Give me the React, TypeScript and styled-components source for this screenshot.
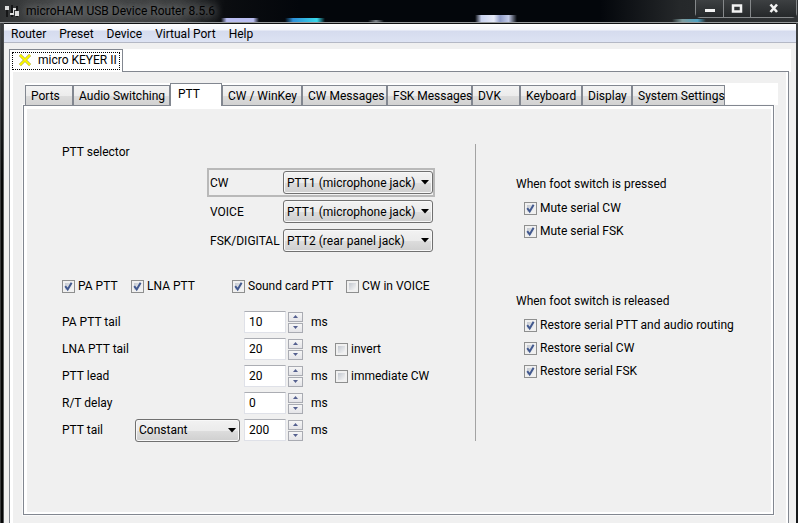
import React, { useState } from "react";
import styled, { createGlobalStyle, css } from "styled-components";

const face = "#f0f0f0";
const line = "#828790";

const GlobalStyle = createGlobalStyle`
  * { box-sizing: border-box; }
  body { margin: 0; background: ${face}; }
  body, button, input, select {
    font-family: Roboto, "Open Sans", sans-serif;
    font-size: 12px;
    line-height: 16px;
    color: #000;
  }
`;

const Window = styled.div`
  display: flex;
  flex-direction: column;
  min-height: 100vh;
  background:
    linear-gradient(#45484a, transparent 180px),
    linear-gradient(90deg, #3a3c3d 1px, #050607 1px, #050607 3px, #55585a 3px, #55585a 4px, #16181a 4px);
`;

const TitleBar = styled.header`
  display: flex;
  align-items: flex-start;
  justify-content: space-between;
  height: 23px;
  flex: none;
  padding-left: 4px;
  border-bottom: 1px solid #96999b;
  background:
    linear-gradient(90deg, transparent, #b9bdf0 15%, #b9bdf0 85%, transparent) 221px 18px / 38px 4px no-repeat,
    linear-gradient(90deg, transparent, #2d8fd8 20%, #38d8ea 80%, transparent) 285px 18px / 40px 4px no-repeat,
    linear-gradient(90deg, transparent, #7d8389, transparent) 368px 20px / 16px 2px no-repeat,
    linear-gradient(90deg, transparent, #c9d2f0 15%, #e6eaf8 45%, #8f9cc8 60%, #c3cbe8 80%, transparent) 475px 15px / 42px 7px no-repeat,
    linear-gradient(90deg, transparent, #7d9a9c 30%, #4fa3c4 75%, transparent) 672px 19px / 34px 3px no-repeat,
    linear-gradient(90deg, #303233 0, #4a4c4d 60px, #3c3e3f 180px, #0b0d10 225px, #03060b 300px, #03060b 600px, #25282a 680px, #303335 100%);
`;

const Caption = styled.h1`
  display: flex;
  align-items: center;
  gap: 6px;
  margin: 0;
  height: 21px;
  font-size: 12px;
  font-weight: 400;
  text-shadow: 0 0 8px #8a8c8d, 0 0 10px #77797a;
`;

const CaptionButtons = styled.div`
  display: flex;
  height: 18px;
  margin-right: 1px;
  border: 1px solid #85888a;
  border-top: 0;
  border-radius: 0 0 5px 5px;
`;

const CaptionButton = styled.button<{ $wide?: boolean }>`
  display: grid;
  place-items: center;
  width: ${(p) => (p.$wide ? 46 : 27)}px;
  padding: 0;
  border: 0;
  background: linear-gradient(#3d4042, #25282a);
  & + & { border-left: 1px solid #85888a; }
`;

const Client = styled.div`
  display: flex;
  flex-direction: column;
  flex: 1;
  margin: 0 2px 0 4px;
  border-top: 1px solid #101214;
  background: ${face};
`;

const MenuBar = styled.nav`
  display: flex;
  height: 19px;
  flex: none;
  padding-left: 1px;
  border-bottom: 1px solid #b4b8c5;
  background: linear-gradient(#fff 0, #f3f5fb 6px, #d5dbee 7px, #dde3f3 100%);
`;

const MenuItem = styled.button`
  padding: 2px 7px 0 6px;
  border: 0;
  background: none;
`;

const DeviceArea = styled.div`
  display: flex;
  flex-direction: column;
  flex: 1;
  padding: 6px 5px 0;
`;

const Strip = styled.div`
  display: flex;
  align-items: flex-end;
  background: #fff;
`;

const DeviceStrip = styled(Strip)`
  height: 23px;
`;

const StripRule = styled.div`
  flex: 1;
  margin-right: 2px;
  border-bottom: 1px solid ${line};
`;

const DeviceTab = styled.button`
  width: 114px;
  height: 23px;
  padding: 2px;
  border: 1px solid ${line};
  border-bottom: 0;
  background: #fff;
`;

const FocusRing = styled.span`
  display: flex;
  align-items: center;
  gap: 7px;
  height: 18px;
  padding: 0 0 2px 6px;
  border: 1px dotted #000;
  white-space: nowrap;
`;

const DevicePane = styled.section`
  flex: 1;
  margin-right: 2px;
  padding: 11px 10px 8px;
  border: 1px solid ${line};
  border-width: 0 1px;
  box-shadow: inset 3px 0 #fff, inset -2px 0 #fff;
`;

const PageStrip = styled(Strip)`
  height: 22px;
  margin-left: 5px;
`;

const PageTab = styled.button<{ $width: number; $active?: boolean }>`
  width: ${(p) => p.$width}px;
  height: 20px;
  padding: 0 0 0 5px;
  border: 1px solid ${line};
  border-bottom: 0;
  background: linear-gradient(#f3f3f3 0, #ececec 50%, #dcdcdc 51%, #d2d2d2 100%);
  text-align: left;
  white-space: nowrap;
  ${(p) =>
    p.$active &&
    css`
      z-index: 1;
      height: 23px;
      margin-bottom: -1px;
      padding: 0 0 3px 7px;
      background: #fff;
    `}
`;

const Page = styled.div`
  display: flex;
  margin: 0 4px 0 3px;
  padding: 38px 12px 73px 38px;
  border: 1px solid ${line};
  box-shadow: inset 3px 3px #fff, inset -2px -2px #fff, 0 0 0 1px #fafafa;
`;

const Timing = styled.div`
  width: 414px;
  flex: none;
  border-right: 1px solid #a3a3a3;
`;

const Heading = styled.h2`
  margin: 0;
  font-size: 12px;
  font-weight: 400;
`;

const Selectors = styled.div`
  width: 228px;
  margin: 8px 0 23px 145px;
`;

const SelectorRow = styled.div<{ $framed?: boolean }>`
  display: flex;
  align-items: center;
  justify-content: space-between;
  height: 29px;
  padding-left: 1px;
  border: 2px solid ${(p) => (p.$framed ? "#b9b9b9" : "transparent")};
`;

const Combo = styled.span<{ $width: number }>`
  display: grid;
  align-items: center;
  width: ${(p) => p.$width}px;
  flex: none;
  svg {
    grid-area: 1 / 1;
    justify-self: end;
    margin-right: 4px;
    pointer-events: none;
  }
`;

const Select = styled.select`
  grid-area: 1 / 1;
  appearance: none;
  width: 100%;
  height: 23px;
  padding: 0 0 0 3px;
  border: 1px solid #707070;
  border-radius: 3px;
  background: linear-gradient(#f2f2f2 0, #ebebeb 50%, #dddddd 51%, #cfcfcf 100%);
  box-shadow: inset 0 0 0 1px #f8f8f8;
`;

const CheckLabel = styled.label`
  display: flex;
  align-items: center;
  gap: 3px;
  white-space: nowrap;
`;

const CheckBox = styled.input`
  appearance: none;
  width: 13px;
  height: 13px;
  margin: 0;
  padding: 2px;
  border: 1px solid #8e8f8f;
  background: linear-gradient(135deg, #c3c8d0, #f6f6f6) content-box #f4f4f4;
`;

const CheckMark = styled.span`
  display: grid;
  flex: none;
  > * { grid-area: 1 / 1; }
  svg { pointer-events: none; }
`;

const Toggles = styled.div`
  display: grid;
  grid-template-columns: 69px 101px 114px auto;
  height: 16px;
  margin-bottom: 17px;
`;

const TimingRow = styled.div`
  display: flex;
  align-items: center;
  height: 22px;
  margin-bottom: 5px;
  &:last-child { margin-bottom: 0; }
`;

const RowLabel = styled.label`
  width: 73px;
  white-space: nowrap;
`;

const ModeSlot = styled.div`
  width: 109px;
`;

const NumberBox = styled.input`
  width: 42px;
  height: 22px;
  padding: 0 0 1px 4px;
  border: 1px solid #dfe1e8;
  border-top-color: #abadb3;
  background: #fff;
`;

const Spinner = styled.div`
  display: grid;
  gap: 1px;
  margin: 0 8px 0 2px;
`;

const SpinButton = styled.button`
  display: grid;
  place-items: center;
  width: 15px;
  height: 10px;
  padding: 0;
  border: 1px solid #a9abb2;
  background: linear-gradient(#f6f6f6, #e4e4e8);
`;

const Unit = styled.span`
  width: 24px;
`;

const FootSwitch = styled.div`
  flex: 1;
  padding: 32px 0 0 40px;
`;

const Group = styled.section`
  margin-bottom: 54px;
  &:last-child { margin-bottom: 0; }
`;

const GroupList = styled.div`
  display: grid;
  gap: 7px;
  margin: 8px 0 0 8px;
`;

function Check({ text, on = false }: { text: string; on?: boolean }) {
  const [checked, setChecked] = useState(on);
  return (
    <CheckLabel>
      <CheckMark>
        <CheckBox type="checkbox" checked={checked} onChange={() => setChecked(!checked)} />
        {checked && (
          <svg width="13" height="13" viewBox="0 0 13 13" fill="none" stroke="#42598f" strokeWidth="2">
            <path d="M3.2 6.2 5.7 9.4 9.6 2.8" />
          </svg>
        )}
      </CheckMark>
      {text}
    </CheckLabel>
  );
}

function ComboBox({ id, label, options, width }: { id?: string; label?: string; options: string[]; width: number }) {
  return (
    <Combo $width={width}>
      <Select id={id} aria-label={label}>
        {options.map((o) => (
          <option key={o}>{o}</option>
        ))}
      </Select>
      <svg width="8" height="5" viewBox="0 0 8 5">
        <path d="M0 0H8L4 4.5Z" fill="#000" />
      </svg>
    </Combo>
  );
}

function Timer({ label, initial, mode, extra }: { label: string; initial: number; mode?: boolean; extra?: string }) {
  const [value, setValue] = useState(String(initial));
  const id = label.replace(/\W/g, "-");
  const step = (d: number) => setValue(String(Math.max(0, (Number(value) || 0) + d)));
  return (
    <TimingRow>
      <RowLabel htmlFor={id}>{label}</RowLabel>
      <ModeSlot>{mode && <ComboBox label="PTT tail mode" options={["Constant"]} width={105} />}</ModeSlot>
      <NumberBox id={id} inputMode="numeric" value={value} onChange={(e) => setValue(e.target.value)} />
      <Spinner>
        <SpinButton aria-label={`Increase ${label}`} onClick={() => step(1)}>
          <svg width="5" height="3" viewBox="0 0 5 3"><path d="M0 3 2.5 0 5 3Z" fill="#55608f" /></svg>
        </SpinButton>
        <SpinButton aria-label={`Decrease ${label}`} onClick={() => step(-1)}>
          <svg width="5" height="3" viewBox="0 0 5 3"><path d="M0 0H5L2.5 3Z" fill="#55608f" /></svg>
        </SpinButton>
      </Spinner>
      <Unit>ms</Unit>
      {extra && <Check text={extra} />}
    </TimingRow>
  );
}

const pages: [string, number][] = [
  ["Ports", 48],
  ["Audio Switching", 97],
  ["PTT", 52],
  ["CW / WinKey", 80],
  ["CW Messages", 85],
  ["FSK Messages", 85],
  ["DVK", 48],
  ["Keyboard", 62],
  ["Display", 50],
  ["System Settings", 93],
];

const selectors = [
  { label: "CW", options: ["PTT1 (microphone jack)", "PTT2 (rear panel jack)"] },
  { label: "VOICE", options: ["PTT1 (microphone jack)", "PTT2 (rear panel jack)"] },
  { label: "FSK/DIGITAL", options: ["PTT2 (rear panel jack)", "PTT1 (microphone jack)"] },
];

export default function App() {
  return (
    <>
      <GlobalStyle />
      <Window>
        <TitleBar>
          <Caption>
            <svg width="16" height="14" viewBox="0 0 16 14">
              <path d="M3 3V13M8 1V13M13 2V13" stroke="#151617" strokeWidth="2" />
              <path d="M1 2H5V6H1ZM6 9H9V4H12V6H10V11H6ZM11 7H15V12H11Z" fill="#dedede" />
            </svg>
            microHAM USB Device Router 8.5.6
          </Caption>
          <CaptionButtons>
            <CaptionButton aria-label="Minimize">
              <svg width="12" height="14" viewBox="0 0 12 14">
                <path d="M1 7H11V10H1Z" fill="#f2f2f2" />
              </svg>
            </CaptionButton>
            <CaptionButton aria-label="Maximize">
              <svg width="12" height="14" viewBox="0 0 12 14">
                <path d="M2 3.500H10V9.500H2Z" fill="none" stroke="#f2f2f2" strokeWidth="2.500" />
              </svg>
            </CaptionButton>
            <CaptionButton aria-label="Close" $wide>
              <svg width="12" height="14" viewBox="0 0 12 14">
                <path d="M2.500 2.500 9 10M9 2.500 2.500 10" stroke="#f2f2f2" strokeWidth="2.600" />
              </svg>
            </CaptionButton>
          </CaptionButtons>
        </TitleBar>
        <Client>
          <MenuBar>
            {["Router", "Preset", "Device", "Virtual Port", "Help"].map((m) => (
              <MenuItem key={m}>{m}</MenuItem>
            ))}
          </MenuBar>
          <DeviceArea>
            <DeviceStrip>
              <DeviceTab>
                <FocusRing>
                  <svg width="12" height="12" viewBox="0 0 12 12" fill="none">
                    <path d="M1 1 11 11M11 1 1 11" stroke="#8f8a3a" strokeWidth="2.800" />
                    <path d="M1 1 11 11M11 1 1 11" stroke="#fbf800" strokeWidth="2" />
                  </svg>
                  micro KEYER II
                </FocusRing>
              </DeviceTab>
              <StripRule />
            </DeviceStrip>
            <DevicePane>
              <PageStrip>
                {pages.map(([name, width]) => (
                  <PageTab key={name} $width={width} $active={name === "PTT"}>
                    {name}
                  </PageTab>
                ))}
              </PageStrip>
              <Page>
                <Timing>
                  <Heading>PTT selector</Heading>
                  <Selectors>
                    {selectors.map((s, i) => (
                      <SelectorRow key={s.label} $framed={i === 0}>
                        <label htmlFor={s.label}>{s.label}</label>
                        <ComboBox id={s.label} options={s.options} width={150} />
                      </SelectorRow>
                    ))}
                  </Selectors>
                  <Toggles>
                    <Check text="PA PTT" on />
                    <Check text="LNA PTT" on />
                    <Check text="Sound card PTT" on />
                    <Check text="CW in VOICE" />
                  </Toggles>
                  <Timer label="PA PTT tail" initial={10} />
                  <Timer label="LNA PTT tail" initial={20} extra="invert" />
                  <Timer label="PTT lead" initial={20} extra="immediate CW" />
                  <Timer label="R/T delay" initial={0} />
                  <Timer label="PTT tail" initial={200} mode />
                </Timing>
                <FootSwitch>
                  <Group>
                    <Heading>When foot switch is pressed</Heading>
                    <GroupList>
                      <Check text="Mute serial CW" on />
                      <Check text="Mute serial FSK" on />
                    </GroupList>
                  </Group>
                  <Group>
                    <Heading>When foot switch is released</Heading>
                    <GroupList>
                      <Check text="Restore serial PTT and audio routing" on />
                      <Check text="Restore serial CW" on />
                      <Check text="Restore serial FSK" on />
                    </GroupList>
                  </Group>
                </FootSwitch>
              </Page>
            </DevicePane>
          </DeviceArea>
        </Client>
      </Window>
    </>
  );
}
